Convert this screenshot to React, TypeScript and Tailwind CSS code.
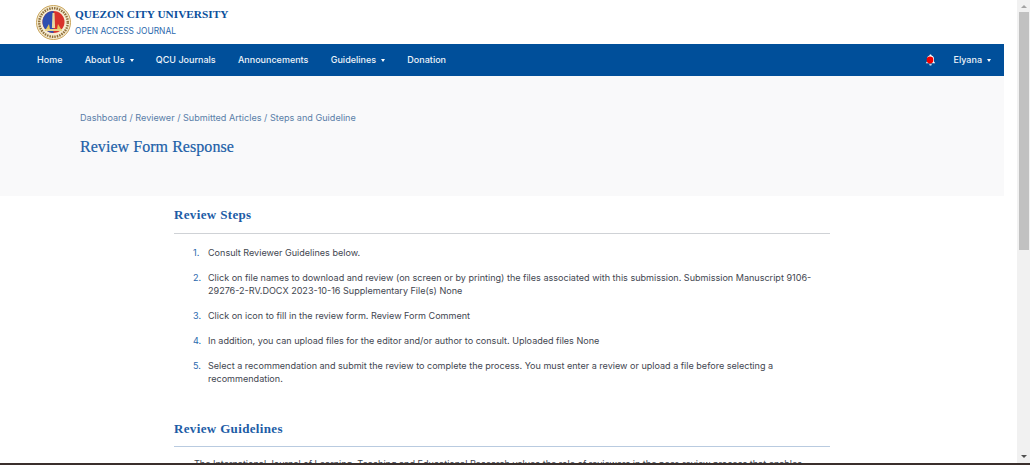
import React from "react";

const Caret = () => (
  <span className="ml-[5px] inline-block w-0 h-0 border-x-[2px] border-x-transparent border-t-[3px] border-t-white align-middle" />
);

const Logo = () => (
  <svg width="35" height="35" viewBox="0 0 35 35" className="shrink-0">
    <circle cx="17.5" cy="17.5" r="17" fill="#f6ecd2" stroke="#c9a45a" strokeWidth="1" />
    <circle cx="17.5" cy="17.5" r="14.3" fill="none" stroke="#8f6f3a" strokeWidth="2.4" strokeDasharray="1.5 1" />
    <circle cx="17.5" cy="17" r="11" fill="#d8322c" />
    <path d="M17.5 6a11 11 0 0 0 0 22z" fill="#2f4fb0" />
    <path d="M16.500 8h2l.6 15h-3.200z" fill="#e9d9a0" />
    <path d="M10 24l3-5 1 5zM25 24l-3-5-1 5z" fill="#e5c55a" />
    <rect x="9" y="24" width="17" height="2" fill="#e8d48a" />
  </svg>
);

const Bell = () => (
  <svg width="11" height="12" viewBox="0 0 11 12">
    <path d="M5.500 0.500c-.6 0-1 .4-1 1C2.800 2 2 3.400 2 5v2.500L.8 9.300h9.400L9 7.500V5c0-1.600-.8-3-2.500-3.500 0-.6-.4-1-1-1z" fill="#fff" />
    <path d="M4.200 10.200h2.600a1.300 1.300 0 0 1-2.600 0z" fill="#fff" />
    <circle cx="5" cy="6" r="3.400" fill="#f00000" />
  </svg>
);

const steps: React.ReactNode[] = [
  "Consult Reviewer Guidelines below.",
  <>
    Click on file names to download and review (on screen or by printing) the files associated with this submission. Submission Manuscript 9106-
    <br />
    29276-2-RV.DOCX 2023-10-16 Supplementary File(s) None
  </>,
  "Click on icon to fill in the review form. Review Form Comment",
  "In addition, you can upload files for the editor and/or author to consult. Uploaded files None",
  <>
    Select a recommendation and submit the review to complete the process. You must enter a review or upload a file before selecting a
    <br />
    recommendation.
  </>,
];

const nav = [
  { label: "Home", caret: false },
  { label: "About Us", caret: true },
  { label: "QCU Journals", caret: false },
  { label: "Announcements", caret: false },
  { label: "Guidelines", caret: true },
  { label: "Donation", caret: false },
];

export default function App() {
  return (
    <div className="h-[465px] w-[1030px] overflow-hidden flex flex-col bg-white font-['Inter',sans-serif]">
      <div className="h-[463px] shrink-0 flex overflow-hidden">
        <div className="w-[1004px] shrink-0 flex flex-col">
          <header className="h-[44px] shrink-0 flex items-center pl-[36px] gap-[4px]">
            <Logo />
            <div className="flex flex-col">
              <span className="font-['Liberation_Serif',serif] font-bold text-[11.3px] leading-[14px] text-[#0b4f9c]">
                QUEZON CITY UNIVERSITY
              </span>
              <span className="mt-[4px] text-[8.4px] leading-[12px] text-[#2a68ad]">OPEN ACCESS JOURNAL</span>
            </div>
          </header>
          <nav className="h-[32px] shrink-0 bg-[#004f9a] flex items-center pl-[37px] pr-[13px] text-[9px] font-medium text-[#eef3f9]">
            <ul className="flex gap-[22.300px]">
              {nav.map((n) => (
                <li key={n.label} className="flex items-center">
                  {n.label}
                  {n.caret && <Caret />}
                </li>
              ))}
            </ul>
            <div className="ml-auto flex items-center gap-[17px]">
              <Bell />
              <span className="flex items-center">
                Elyana
                <Caret />
              </span>
            </div>
          </nav>
          <section className="h-[120px] shrink-0 bg-[#f9f9fa] pl-[80px] pt-[35px]">
            <div className="text-[9.1px] leading-[14px] text-[#5a7ea8]">Dashboard / Reviewer / Submitted Articles / Steps and Guideline</div>
            <h1 className="mt-[12px] font-['Liberation_Serif',serif] text-[16px] leading-[20px] tracking-[0.05px] text-[#1c60a8] [-webkit-text-stroke:0.2px_#1c60a8]">
              Review Form Response
            </h1>
          </section>
          <main className="pl-[174px] w-[830px] text-[9.05px] leading-[13px] text-[#3f4650]">
            <h2 className="mt-[11px] font-['Liberation_Serif',serif] font-bold text-[13px] leading-[16px] tracking-[0.35px] text-[#1c5ca6]">
              Review Steps
            </h2>
            <div className="mt-[10px] h-px bg-[#cfd2d6]" />
            <ol className="mt-[12px] pl-[19px] flex flex-col gap-[12px]">
              {steps.map((s, i) => (
                <li key={i} className="flex">
                  <span className="w-[15px] shrink-0 text-[#2a68ad]">{i + 1}.</span>
                  <span className="whitespace-nowrap">{s}</span>
                </li>
              ))}
            </ol>
            <h2 className="mt-[36px] font-['Liberation_Serif',serif] font-bold text-[13px] leading-[16px] tracking-[0.35px] text-[#1c5ca6]">
              Review Guidelines
            </h2>
            <div className="mt-[9px] h-px bg-[#b9cbe0]" />
            <p className="mt-[10px] pl-[20px] whitespace-nowrap">
              The International Journal of Learning, Teaching and Educational Research values the role of reviewers in the peer-review process that enables
            </p>
          </main>
        </div>
        <div className="w-[13px] shrink-0" />
        <aside className="w-[13px] shrink-0 bg-[#f1f1f1] flex flex-col items-center">
          <div className="h-[12px] shrink-0 flex items-center justify-center">
            <span className="w-0 h-0 border-x-[3px] border-x-transparent border-b-[3px] border-b-[#a3a3a3]" />
          </div>
          <div className="w-[10px] h-[238px] shrink-0 bg-[#c1c1c1]" />
          <div className="mt-auto h-[13px] shrink-0 flex items-center justify-center">
            <span className="w-0 h-0 border-x-[3px] border-x-transparent border-t-[3px] border-t-[#505050]" />
          </div>
        </aside>
      </div>
      <div className="h-[2px] shrink-0 bg-[#3a2f2c]" />
    </div>
  );
}
